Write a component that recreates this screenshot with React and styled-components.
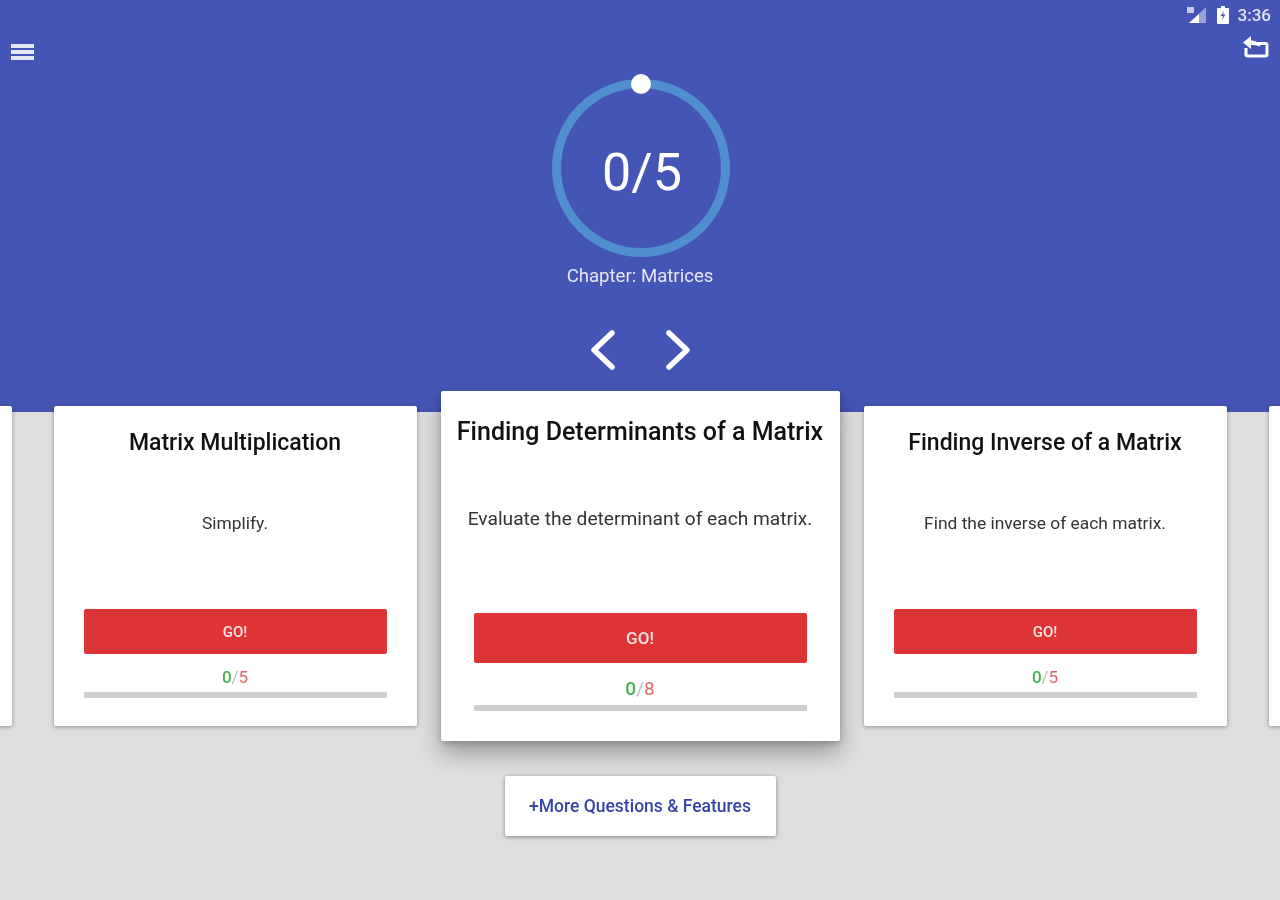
import React from "react";
import styled, { createGlobalStyle } from "styled-components";

const colors = {
  primary: "#4555b5",
  ring: "#4f8fd0",
  page: "#dedede",
  red: "#dd3535",
  track: "#cfcfcf",
  green: "#4caf50",
  pink: "#d9686c",
  link: "#3644a8",
};

const lessons = [
  { title: "", text: "", total: 0 },
  { title: "Matrix Multiplication", text: "Simplify.", total: 5 },
  {
    title: "Finding Determinants of a Matrix",
    text: "Evaluate the determinant of each matrix.",
    total: 8,
    active: true,
  },
  { title: "Finding Inverse of a Matrix", text: "Find the inverse of each matrix.", total: 5 },
  { title: "", text: "", total: 0 },
];

export default function App() {
  return (
    <>
      <GlobalStyle />
      <Page>
        <Header>
          <StatusBar>
            <svg width="22" height="20" viewBox="0 0 22 20">
              <path d="M20 2v16H3z" fill="#fff" opacity="0.45" />
              <path d="M13 9v9H3z" fill="#fff" />
              <rect x="1" y="2" width="7" height="6" fill="#fff" opacity="0.7" />
            </svg>
            <svg width="12" height="18" viewBox="0 0 12 18">
              <path
                d="M4 0h4v2h3a1 1 0 0 1 1 1v14a1 1 0 0 1-1 1H1a1 1 0 0 1-1-1V3a1 1 0 0 1 1-1h3z"
                fill="#fff"
              />
              <path d="M7 5 3.500 10H6l-1 4 3.500-5.500H6z" fill="#4555b5" />
            </svg>
            <Clock>3:36</Clock>
          </StatusBar>
          <Toolbar>
            <Hamburger>
              <span />
              <span />
              <span />
            </Hamburger>
            <svg width="26" height="22" viewBox="0 0 26 22" fill="none">
              <path
                d="M9 7.500h13.500a1.500 1.500 0 0 1 1.500 1.500v9.500a1.500 1.500 0 0 1-1.500 1.500H4.500A1.500 1.500 0 0 1 3 18.500V12"
                stroke="#fff"
                strokeWidth="3"
              />
              <path d="M0 6.500 8 0v4.500c4.500 0 8 2 9.500 6.500C15 9.500 11.500 9 8 9v4z" fill="#fff" />
            </svg>
          </Toolbar>
          <Progress>
            <Ring width="186" height="184" viewBox="0 0 186 184" fill="none">
              <circle cx="94" cy="94" r="84.500" stroke={colors.ring} strokeWidth="9" />
              <circle cx="94" cy="10" r="10" fill="#fff" />
            </Ring>
            <Score>0/5</Score>
          </Progress>
          <Chapter>Chapter: Matrices</Chapter>
          <Arrows>
            <svg width="26" height="40" viewBox="0 0 26 40" fill="none">
              <path d="M22 3 4 20l18 17" stroke="#fff" strokeWidth="5.500" strokeLinecap="round" strokeLinejoin="round" />
            </svg>
            <svg width="26" height="40" viewBox="0 0 26 40" fill="none">
              <path d="M4 3l18 17L4 37" stroke="#fff" strokeWidth="5.500" strokeLinecap="round" strokeLinejoin="round" />
            </svg>
          </Arrows>
        </Header>

        <Carousel>
          {lessons.map((lesson, i) =>
            lesson.title ? (
              <Card key={i} $active={lesson.active}>
                <Title $active={lesson.active}>{lesson.title}</Title>
                <Description $active={lesson.active}>{lesson.text}</Description>
                <GoButton $active={lesson.active}>GO!</GoButton>
                <Count $active={lesson.active}>
                  <b>0</b>
                  <i>/</i>
                  <u>{lesson.total}</u>
                </Count>
                <Track $active={lesson.active} />
              </Card>
            ) : (
              <Card key={i} $peek />
            )
          )}
        </Carousel>

        <MoreRow>
          <MoreButton>+More Questions &amp; Features</MoreButton>
        </MoreRow>
      </Page>
    </>
  );
}

const GlobalStyle = createGlobalStyle`
  html, body {
    margin: 0;
    padding: 0;
    background: ${colors.page};
  }
  body {
    font-family: Roboto, "Liberation Sans", sans-serif;
  }
`;

const Page = styled.div`
  width: 1280px;
  height: 900px;
  overflow: hidden;
  background: ${colors.page};
  filter: blur(0.5px);
`;

const Header = styled.header`
  height: 412px;
  background: ${colors.primary};
  display: flex;
  flex-direction: column;
  align-items: center;
`;

const StatusBar = styled.div`
  align-self: stretch;
  height: 30px;
  padding-right: 9px;
  display: flex;
  justify-content: flex-end;
  align-items: center;
  gap: 9px;
`;

const Clock = styled.span`
  font-size: 17px;
  font-weight: 500;
  color: #dfe3f3;
`;

const Toolbar = styled.div`
  align-self: stretch;
  height: 44px;
  padding: 6px 11px 0 11px;
  box-sizing: border-box;
  display: flex;
  justify-content: space-between;
  align-items: flex-start;
`;

const Hamburger = styled.div`
  width: 23px;
  margin-top: 8px;
  display: flex;
  flex-direction: column;
  gap: 2px;

  span {
    height: 4px;
    background: #e6e8f5;
  }
`;

const Progress = styled.div`
  display: grid;
  place-items: center;
  width: 186px;
  height: 184px;
`;

const Ring = styled.svg`
  grid-area: 1 / 1;
`;

const Score = styled.div`
  grid-area: 1 / 1;
  margin: 12px 0 0 4px;
  font-size: 52px;
  font-weight: 400;
  color: #fff;
`;

const Chapter = styled.div`
  margin-top: 6px;
  font-size: 18.600px;
  line-height: 24px;
  color: #e3e6f5;
`;

const Arrows = styled.div`
  margin-top: 42px;
  display: flex;
  gap: 49px;
  padding-left: 1px;
`;

const Carousel = styled.div`
  margin-top: -21px;
  height: 350px;
  display: flex;
  justify-content: center;
  align-items: center;
  gap: 24px;
`;

const Card = styled.article`
  flex: none;
  box-sizing: border-box;
  width: ${(p) => (p.$active ? "399px" : "363px")};
  height: ${(p) => (p.$active ? "350px" : "320px")};
  margin: ${(p) => (p.$peek ? "0 18px" : "0")};
  padding: ${(p) => (p.$active ? "26px 33px 0" : "22px 30px 0")};
  background: #fff;
  border-radius: 2px;
  display: flex;
  flex-direction: column;
  align-items: center;
  box-shadow: ${(p) =>
    p.$active
      ? "0 12px 22px rgba(0, 0, 0, 0.3), 0 2px 6px rgba(0, 0, 0, 0.2)"
      : "0 1px 4px rgba(0, 0, 0, 0.35)"};
`;

const Title = styled.h2`
  margin: 0;
  white-space: nowrap;
  font-size: ${(p) => (p.$active ? "25px" : "23px")};
  line-height: 30px;
  font-weight: 500;
  color: #111;
`;

const Description = styled.p`
  flex: none;
  margin: ${(p) => (p.$active ? "60px 0 0" : "53px 0 0")};
  height: ${(p) => (p.$active ? "106px" : "98px")};
  white-space: nowrap;
  font-size: ${(p) => (p.$active ? "19.200px" : "17.400px")};
  line-height: 24px;
  color: #333;
`;

const GoButton = styled.button`
  flex: none;
  align-self: stretch;
  height: ${(p) => (p.$active ? "50px" : "45px")};
  border: 0;
  padding: 0;
  border-radius: 2px;
  background: ${colors.red};
  color: #f6e3e3;
  font-family: inherit;
  font-size: ${(p) => (p.$active ? "17px" : "15px")};
  font-weight: 500;
`;

const Count = styled.div`
  margin-top: ${(p) => (p.$active ? "14px" : "12px")};
  font-size: ${(p) => (p.$active ? "19px" : "17px")};
  line-height: ${(p) => (p.$active ? "24px" : "22px")};
  color: #b9b9b9;

  b {
    font-weight: 500;
    color: ${colors.green};
  }
  i {
    font-style: normal;
  }
  u {
    text-decoration: none;
    color: ${colors.pink};
  }
`;

const Track = styled.div`
  flex: none;
  align-self: stretch;
  margin-top: 4px;
  height: 6px;
  border-radius: 1px;
  background: ${colors.track};
`;

const MoreRow = styled.div`
  margin-top: 35px;
  display: flex;
  justify-content: center;
`;

const MoreButton = styled.button`
  width: 271px;
  height: 60px;
  padding: 0;
  border: 0;
  border-radius: 2px;
  background: #fff;
  color: ${colors.link};
  font-family: inherit;
  font-size: 17.500px;
  font-weight: 500;
  box-shadow: 0 1px 4px rgba(0, 0, 0, 0.4);
`;
